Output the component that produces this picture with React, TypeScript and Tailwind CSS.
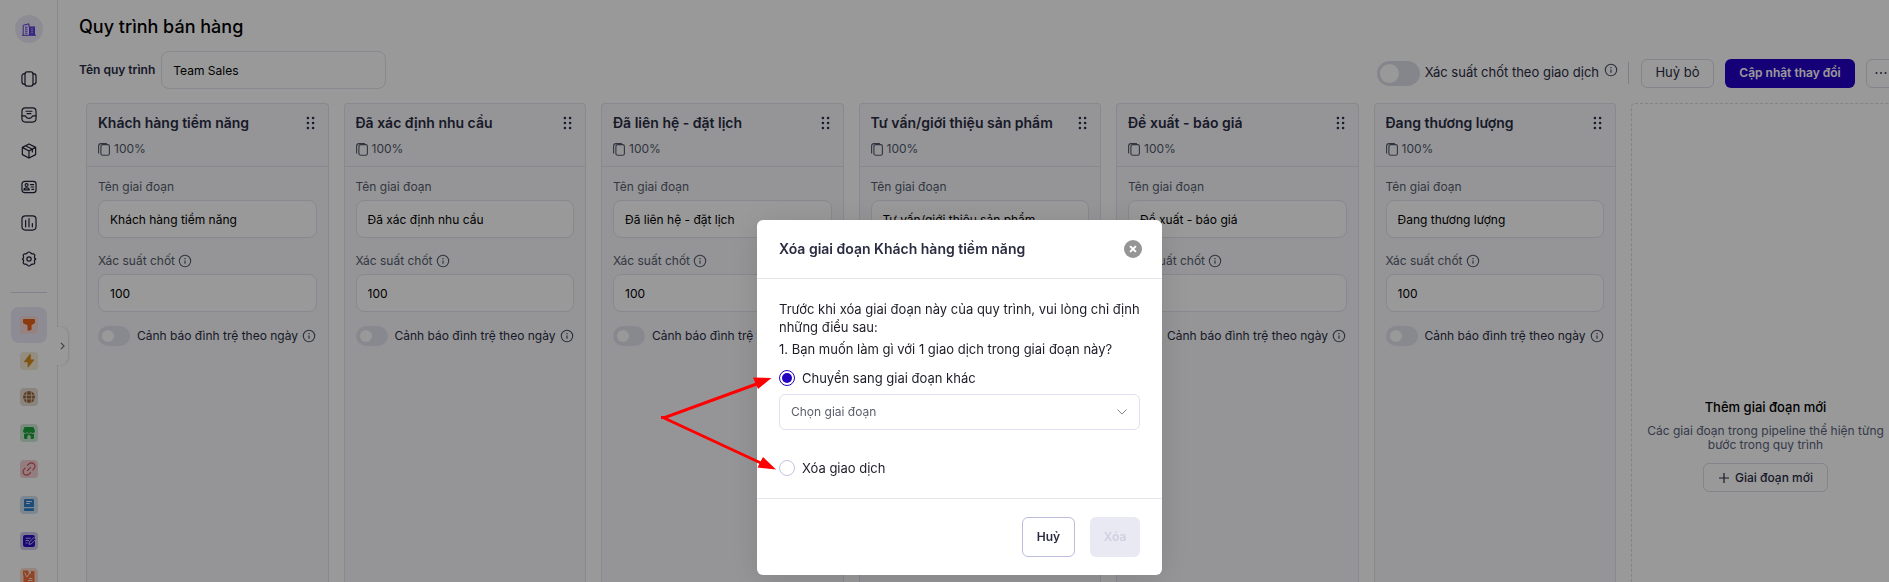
import React, { useId } from "react";

type IconProps = { className?: string };

const stroke = {
  fill: "none",
  stroke: "currentColor",
  strokeWidth: 1.5,
  strokeLinecap: "round" as const,
  strokeLinejoin: "round" as const,
};

function InfoIcon({ className = "" }: IconProps) {
  return (
    <svg viewBox="0 0 14 14" className={`size-[14px] shrink-0 ${className}`} fill="none" stroke="currentColor" aria-hidden="true">
      <circle cx="7" cy="7" r="5.7" strokeWidth="1.1" />
      <path d="M7 6.4v3.4" strokeWidth="1.2" />
      <path d="M7 4.1v1.2" strokeWidth="1.3" />
    </svg>
  );
}

function CopyIcon({ className = "" }: IconProps) {
  return (
    <svg viewBox="0 0 12 13" className={`h-[13px] w-3 shrink-0 ${className}`} fill="none" stroke="currentColor" aria-hidden="true">
      <rect x="2.9" y="1.6" width="8.5" height="10.6" rx="1.8" strokeWidth="1.1" />
      <path d="M.6 10V3C.6 1.5 1.5.6 3 .6h5.5" strokeWidth="1.1" strokeLinecap="round" />
    </svg>
  );
}

function GripIcon({ className = "" }: IconProps) {
  return (
    <svg viewBox="0 0 9 14" className={`h-[14px] w-[9px] ${className}`} fill="currentColor" aria-hidden="true">
      {[2, 7, 12].map((y) => (
        <g key={y}>
          <circle cx="1.9" cy={y} r="1.3" />
          <circle cx="7.1" cy={y} r="1.3" />
        </g>
      ))}
    </svg>
  );
}

const navItems: { label: string; icon: React.ReactNode }[] = [
  {
    label: "Bảng",
    icon: (
      <g {...stroke}>
        <rect x="5" y="1.2" width="10" height="17.6" rx="2.6" />
        <path d="M5 3.4C2.4 3.4 1.2 4 1.2 6.4v7.2c0 2.4 1.2 3 3.8 3M15 3.4c2.6 0 3.8.6 3.8 3v7.2c0 2.4-1.2 3-3.8 3" />
      </g>
    ),
  },
  {
    label: "Hộp thư",
    icon: (
      <g {...stroke}>
        <rect x="1.2" y="1.2" width="17.6" height="17.6" rx="4.4" />
        <path d="M1.4 11.2h3c1 0 1.700.5 2.100 1.300.6 1.300 1.500 1.700 3.500 1.700s2.900-.4 3.500-1.700c.4-.8 1.100-1.300 2.100-1.300h3M6.300 5.300h7.400M7.600 8.300h4.800" />
      </g>
    ),
  },
  {
    label: "Sản phẩm",
    icon: (
      <g {...stroke}>
        <path d="M10 1.200 18.300 5.500v9L10 18.800 1.700 14.500v-9zM1.700 5.500 10 9.900l8.300-4.400M10 9.900v8.900M5.700 3.500l8.500 4.400v3.200" />
      </g>
    ),
  },
  {
    label: "Liên hệ",
    icon: (
      <g {...stroke}>
        <rect x="1.200" y="3" width="17.600" height="14" rx="3.400" />
        <circle cx="7" cy="7.600" r="1.800" />
        <path d="M3.700 13.600c0-1.700 1.500-2.500 3.300-2.500s3.300.8 3.300 2.500zM11.800 7h4M12.600 10h3.200M13.600 13h2.200" />
      </g>
    ),
  },
  {
    label: "Báo cáo",
    icon: (
      <g {...stroke}>
        <rect x="1.200" y="1.200" width="17.600" height="17.600" rx="4.400" />
        <path d="M5.800 6.800v8M10 4.600v10.200M14.200 10.600v4.200" />
      </g>
    ),
  },
  {
    label: "Cài đặt",
    icon: (
      <g {...stroke}>
        <circle cx="10" cy="10" r="2.700" />
        <path d="M8 2.300c1.200-1.400 2.800-1.400 4 0 .8 1 1.700 1.400 3 1.300 1.700-.1 2.600 1.300 2 3-.5 1.200-.3 2 .6 2.700 0 0 .9.300.9.700s-.9.700-.9.700c-.9.700-1.100 1.500-.6 2.700.6 1.700-.3 3.100-2 3-1.300-.1-2.200.3-3 1.300-1.200 1.400-2.800 1.400-4 0-.8-1-1.700-1.400-3-1.300-1.700.1-2.600-1.300-2-3 .5-1.200.3-2-.6-2.700-.9-.600-.9-.8 0-1.400.9-.700 1.100-1.500.6-2.700-.6-1.700.3-3.100 2-3 1.300.1 2.200-.3 3-1.300z" />
      </g>
    ),
  },
];

const appItems: { label: string; tile: string; active?: boolean; icon: React.ReactNode }[] = [
  {
    label: "Phễu bán hàng",
    tile: "bg-[#f7dad6] text-[#e8611c]",
    active: true,
    icon: <path d="M3 4.200C3 3.500 3.500 3 4.200 3h9.600c.7 0 1.200.5 1.200 1.200V6c0 .8-.3 1.300-1 1.700L11.600 9v4.300c0 .4-.3.7-.6.8l-2.500.7c-.6.100-1-.200-1-.7V9.200L4 7.700C3.300 7.300 3 6.800 3 6z" fill="currentColor" />,
  },
  {
    label: "Tự động hóa",
    tile: "bg-[#f6ead6] text-[#d68a1a]",
    icon: <path d="M10.800 2.700v4.700h2.700c.6 0 .8.500.5.900l-5.400 6.800c-.4.500-1 .3-1-.3v-4.500H4.700c-.6 0-.8-.5-.5-1l5.600-7c.4-.5 1-.3 1 .4z" fill="currentColor" />,
  },
  {
    label: "Website",
    tile: "bg-[#e6ddd4] text-[#9a6538]",
    icon: (
      <>
        <circle cx="9" cy="9" r="6" fill="currentColor" />
        <path d="M3 7.200h12M3 10.900h12M7.200 3.200c-1.200 3.600-1.200 8 0 11.600M10.800 3.200c1.200 3.600 1.200 8 0 11.600" fill="none" stroke="#e6ddd4" strokeWidth="0.8" />
      </>
    ),
  },
  {
    label: "Cửa hàng",
    tile: "bg-[#cfe8d5] text-[#1fa23c]",
    icon: (
      <>
        <path d="M4.500 3h9L15 7c0 1.300-.8 2-2 2s-1.600-.7-2-1.100C10.600 8.500 9.900 9 9 9s-1.600-.5-2-1.100C6.600 8.400 6.100 9 5 9s-2-.7-2-2z" fill="currentColor" />
        <path d="M4 9.800c1.200.3 2.200 0 3-.7 1.200.9 2.800.9 4 0 .8.700 1.800 1 3 .7v4c0 .7-.4 1.200-1.100 1.200h-2.200v-2.400c0-.9-.7-1.400-1.700-1.400s-1.700.5-1.700 1.400V15H5.100C4.400 15 4 14.500 4 13.800z" fill="currentColor" />
      </>
    ),
  },
  {
    label: "Liên kết",
    tile: "bg-[#f3d3d7] text-[#d84a4f]",
    icon: (
      <path d="M7.500 5.300 8.800 4c1.600-1.500 3.800-1.500 5.100-.1s1.300 3.500-.1 5l-1 1M10.500 12.700 9.200 14c-1.600 1.500-3.800 1.500-5.100.1s-1.300-3.500.1-5l1-1M7.400 10.600l3.200-3.200" fill="none" stroke="currentColor" strokeWidth="1.100" strokeLinecap="round" />
    ),
  },
  {
    label: "Tài liệu",
    tile: "bg-[#cfe0ee] text-[#2f80cc]",
    icon: (
      <>
        <path d="M5.500 3h7C13.600 3 14 3.500 14 4.500V11H4V4.500C4 3.500 4.400 3 5.500 3zM4 12.200h10v1.300c0 1-.5 1.500-1.500 1.500h-7C4.500 15 4 14.500 4 13.500z" fill="currentColor" />
        <path d="M6.200 5.500h5.600M6.200 7.500h3.500" stroke="#fff" strokeWidth="0.900" />
      </>
    ),
  },
  {
    label: "Biểu mẫu",
    tile: "bg-[#cfc9ec] text-[#2a0cc4]",
    icon: (
      <>
        <rect x="3" y="3" width="12" height="12" rx="2.200" fill="currentColor" />
        <path d="M5.700 6.200h5M5.700 8.600h3.300M5.700 11h1.800" fill="none" stroke="#dad3f8" strokeWidth="0.900" />
        <path d="M9 12.300l.4-2.300 4.600-4.600 1.900 1.900-4.700 4.700z" fill="currentColor" stroke="#dad3f8" strokeWidth="0.900" />
      </>
    ),
  },
  {
    label: "Hoa hồng",
    tile: "bg-[#f8ddd2] text-[#f2703a]",
    icon: (
      <>
        <path d="M3 2.500h5l1 3 1.500 1 .5-3.500h3.500v12h-11V9.500L3 6z" fill="currentColor" />
        <path d="M4.500 4.500 7 9l3-5M9 10.500h3.500M7.800 12.500h4.700" fill="none" stroke="#ffe0d3" strokeWidth="1" />
      </>
    ),
  },
];

function Sidebar() {
  return (
    <aside className="relative w-[58px] shrink-0 border-r border-[#e3e3ec] bg-white">
      <nav className="flex h-screen flex-col items-center overflow-hidden pt-[15px]" aria-label="Điều hướng">
        <a href="#home" aria-label="Trang chủ" className="flex size-7 shrink-0 items-center justify-center rounded-full bg-[#ebe8f7]">
          <svg viewBox="0 0 14 13" className="h-[13px] w-[14px] text-[#5a37dc]" aria-hidden="true">
            <path d="M1.200 12V2.300L7 .8v3.400" fill="none" stroke="currentColor" strokeWidth="1" />
            <path d="M0 12.300h14" stroke="currentColor" strokeWidth="1" />
            <path d="M3 4.200h2.500M3 6.200h2.500M3 8.200h2.500M3 10.200h2.500" stroke="currentColor" strokeWidth="1" />
            <path d="M7 3.500h6V12H7z" fill="currentColor" />
            <path d="M8.800 5.800h2.400M8.800 7.800h2.400M8.800 9.800h2.400" stroke="#e6e2f8" strokeWidth="0.700" />
          </svg>
        </a>
        <ul className="mt-[18px] flex shrink-0 flex-col">
          {navItems.map((item) => (
            <li key={item.label}>
              <a href="#nav" aria-label={item.label} className="flex size-9 items-center justify-center text-[#1f2136]">
                <svg viewBox="0 0 20 20" className="size-4" aria-hidden="true">{item.icon}</svg>
              </a>
            </li>
          ))}
        </ul>
        <hr className="mt-[15px] mb-[14px] w-9 shrink-0 border-[#d9d7ea]" />
        <ul className="flex shrink-0 flex-col">
          {appItems.map((item) => (
            <li key={item.label}>
              <a
                href="#app"
                aria-label={item.label}
                className={`flex size-9 items-center justify-center rounded-lg ${item.active ? "bg-[#ebe9f8]" : ""}`}
              >
                <span className={`flex size-[18px] items-center justify-center rounded ${item.tile}`}>
                  <svg viewBox="0 0 18 18" className="size-[18px]" aria-hidden="true">{item.icon}</svg>
                </span>
              </a>
            </li>
          ))}
        </ul>
      </nav>
      <button
        type="button"
        aria-label="Mở rộng menu"
        className="absolute top-[327px] -right-[11px] flex h-[38px] w-3 items-center justify-center rounded-r-lg bg-white text-[#6b6b76] shadow-[1px_0_2px_rgba(0,0,0,0.12)]"
      >
        <svg viewBox="0 0 6 10" className="h-2 w-[5px]" fill="none" stroke="currentColor" strokeWidth="1.400" aria-hidden="true">
          <path d="m1 1 4 4-4 4" />
        </svg>
      </button>
    </aside>
  );
}

const inputClass =
  "h-[38px] w-full min-w-0 rounded-lg border border-[#e3e3ee] bg-white px-[11px] text-xs text-black outline-none";

function StageColumn({ name }: { name: string }) {
  const id = useId();
  return (
    <section className="flex min-w-0 flex-col rounded-t border border-b-0 border-[#e3e3ee] bg-[#f8f8fc]">
      <header className="h-[63px] border-b border-[#e3e3ee] px-[11px] pt-[9px]">
        <div className="flex items-center justify-between pr-[2px]">
          <h2 className="truncate text-[14px] leading-5 font-semibold text-[#2a2c44]">{name}</h2>
          <button type="button" aria-label="Kéo để sắp xếp" className="text-[#25304a]">
            <GripIcon />
          </button>
        </div>
        <div className="mt-2 flex items-center gap-1 text-xs leading-4 text-[#50586c]">
          <CopyIcon />
          100%
        </div>
      </header>
      <div className="flex flex-col px-[11px] pt-[11px]">
        <label htmlFor={`${id}-name`} className="text-xs leading-[18px] text-[#565d6e]">Tên giai đoạn</label>
        <input id={`${id}-name`} className={`${inputClass} mt-1`} defaultValue={name} />
        <div className="mt-[14px] flex items-center gap-[3px] text-[#565d6e]">
          <label htmlFor={`${id}-rate`} className="text-xs leading-[18px]">Xác suất chốt</label>
          <InfoIcon />
        </div>
        <input id={`${id}-rate`} className={`${inputClass} mt-1`} defaultValue="100" />
        <div className="mt-[14px] flex h-5 items-center">
          <input
            id={`${id}-warn`}
            type="checkbox"
            role="switch"
            className="h-5 w-8 shrink-0 appearance-none rounded-full bg-[#e3e3ee] before:mt-1 before:ml-1 before:block before:size-3 before:rounded-full before:bg-white"
          />
          <label htmlFor={`${id}-warn`} className="ml-[7px] text-xs whitespace-nowrap text-[#2a2c44]">
            Cảnh báo đình trệ theo ngày
          </label>
          <InfoIcon className="ml-1 text-[#4a5266]" />
        </div>
      </div>
    </section>
  );
}

const stages = [
  "Khách hàng tiềm năng",
  "Đã xác định nhu cầu",
  "Đã liên hệ - đặt lịch",
  "Tư vấn/giới thiệu sản phẩm",
  "Đề xuất - báo giá",
  "Đang thương lượng",
];

function Toolbar() {
  return (
    <div className="flex h-[38px] items-center justify-between">
      <div className="flex items-center gap-[6px]">
        <label htmlFor="pipeline-name" className="text-xs font-semibold whitespace-nowrap text-[#2a2c44]">Tên quy trình</label>
        <div className="w-[225px]">
          <input id="pipeline-name" className={inputClass} defaultValue="Team Sales" />
        </div>
      </div>
      <div className="mt-[6px] flex items-center">
        <input
          id="per-deal"
          type="checkbox"
          role="switch"
          className="h-[25px] w-[43px] shrink-0 appearance-none rounded-full bg-[#dedee9] before:mt-[3px] before:ml-[3px] before:block before:size-[19px] before:rounded-full before:bg-white"
        />
        <label htmlFor="per-deal" className="ml-[5px] text-[13px] whitespace-nowrap text-[#2a2c44]">Xác suất chốt theo giao dịch</label>
        <InfoIcon className="mb-[6px] ml-[5px] text-[#4a5266]" />
        <span className="ml-[10px] h-[22px] w-px bg-[#d2d2de]" />
        <button type="button" className="ml-3 h-[29px] w-[73px] rounded-md border border-[#dcdce8] text-[13px] text-[#2a2c44]">
          Huỷ bỏ
        </button>
        <button type="button" className="ml-[11px] h-[29px] w-[130px] rounded-md bg-[#2500c8] text-xs font-semibold text-white">
          Cập nhật thay đổi
        </button>
        <button type="button" aria-label="Thêm tùy chọn" className="ml-[11px] flex h-[29px] w-[34px] items-center rounded-md border border-[#dcdce8] pl-2 text-[#33364a]">
          <svg viewBox="0 0 12 4" className="h-1 w-3" fill="currentColor" aria-hidden="true">
            <circle cx="1.500" cy="2" r="1" />
            <circle cx="6" cy="2" r="1" />
            <circle cx="10.500" cy="2" r="1" />
          </svg>
        </button>
      </div>
    </div>
  );
}

function AddStage() {
  return (
    <section className="flex flex-col items-center rounded-t border border-b-0 border-dashed border-[#dadae2] px-3 pt-[294px] text-center">
      <h2 className="text-[13px] leading-[18px] font-medium text-black">Thêm giai đoạn mới</h2>
      <p className="mt-2 text-xs leading-[14px] text-[#59627c]">
        Các giai đoạn trong pipeline thể hiện từng bước trong quy trình
      </p>
      <button type="button" className="mt-[11px] flex h-[29px] w-[125px] items-center justify-center gap-[5px] rounded-md border border-[#dcdce8] text-xs font-medium text-[#2a2c44]">
        <svg viewBox="0 0 12 12" className="size-3" stroke="currentColor" strokeWidth="1.200" aria-hidden="true">
          <path d="M6 1v10M1 6h10" />
        </svg>
        Giai đoạn mới
      </button>
    </section>
  );
}

const radioClass =
  "size-4 shrink-0 appearance-none rounded-full border border-[#c4c4e2] bg-white checked:border-[#2400c0] checked:before:m-[2px] checked:before:block checked:before:size-[10px] checked:before:rounded-full checked:before:bg-[#2400c0]";

function DeleteStageDialog() {
  return (
    <div className="fixed inset-0 flex items-start justify-center bg-black/40 pt-[220px] pl-[30px]">
      <div role="dialog" aria-modal="true" aria-labelledby="dialog-title" className="w-[405px] rounded-md bg-white text-[#1c1d26] shadow-[0_4px_32px_rgba(0,0,0,0.12)]">
        <header className="flex h-[59px] items-center justify-between border-b border-[#e6e6ea] px-[22px]">
          <h2 id="dialog-title" className="text-[14px] leading-5 font-semibold text-[#2a2c40]">Xóa giai đoạn Khách hàng tiềm năng</h2>
          <button type="button" aria-label="Đóng" className="-mr-[2px]">
            <svg viewBox="0 0 18 18" className="size-[18px]" aria-hidden="true">
              <circle cx="9" cy="9" r="9" fill="#959595" />
              <path d="m6.100 6.100 5.800 5.800M11.900 6.100l-5.800 5.800" stroke="#fff" strokeWidth="2" />
            </svg>
          </button>
        </header>
        <div className="px-[22px] pt-[21px] pb-[21px] text-[13px] leading-[18px]">
          <p>Trước khi xóa giai đoạn này của quy trình, vui lòng chỉ định những điều sau:</p>
          <p className="mt-1">1. Bạn muốn làm gì với 1 giao dịch trong giai đoạn này?</p>
          <div className="mt-[11px] flex items-center gap-[7px]">
            <input id="opt-move" type="radio" name="deal-action" defaultChecked className={radioClass} />
            <label htmlFor="opt-move">Chuyển sang giai đoạn khác</label>
          </div>
          <div className="relative mt-[7px]">
            <select
              aria-label="Chọn giai đoạn"
              className="block h-9 w-full appearance-none rounded-md border border-[#e0e0ee] bg-white px-[11px] text-xs text-[#5b5d6b] outline-none"
            >
              <option>Chọn giai đoạn</option>
            </select>
            <svg viewBox="0 0 10 6" className="pointer-events-none absolute top-[15px] right-[13px] h-[6px] w-[10px] text-[#85858f]" fill="none" stroke="currentColor" strokeWidth="1" aria-hidden="true">
              <path d="m.5.5 4.500 4.600L9.500.5" />
            </svg>
          </div>
          <div className="mt-[29px] flex items-center gap-[7px]">
            <input id="opt-delete" type="radio" name="deal-action" className={radioClass} />
            <label htmlFor="opt-delete">Xóa giao dịch</label>
          </div>
        </div>
        <footer className="flex justify-end gap-[15px] border-t border-[#e6e6ea] px-[22px] py-[18px]">
          <button type="button" className="h-10 w-[53px] rounded-md border border-[#bcbcdc] text-xs font-semibold text-[#2a2c40]">Huỷ</button>
          <button type="button" disabled className="h-10 w-[50px] rounded-md bg-[#e9e9f3] text-xs font-semibold text-[#cfcfe0]">Xóa</button>
        </footer>
      </div>
      <svg viewBox="0 0 120 110" className="pointer-events-none absolute top-[370px] left-[660px] h-[110px] w-[120px]" aria-hidden="true">
        <path d="M1 47.500h4L98 13.500M3 47.500 103 94" fill="none" stroke="#ff0000" strokeWidth="3" />
        <path d="M111.500 8 93 7.500l5 11.500zM116 99.500 103 87l-5.500 10.500z" fill="#ff0000" />
      </svg>
    </div>
  );
}

export default function App() {
  return (
    <div className="flex h-screen overflow-hidden bg-white font-['Inter',sans-serif]">
      <Sidebar />
      <main className="flex min-w-0 flex-1 flex-col pl-[21px]">
        <div className="-mr-[11px] flex flex-1 flex-col">
          <h1 className="mt-[13px] mb-[10px] text-[18px] leading-7 font-medium text-black">Quy trình bán hàng</h1>
          <Toolbar />
          <div className="mt-[14px] ml-[7px] grid flex-1 grid-cols-[repeat(6,minmax(0,1fr))_269px] gap-[15px]">
            {stages.map((name) => (
              <StageColumn key={name} name={name} />
            ))}
            <AddStage />
          </div>
        </div>
      </main>
      <DeleteStageDialog />
    </div>
  );
}
